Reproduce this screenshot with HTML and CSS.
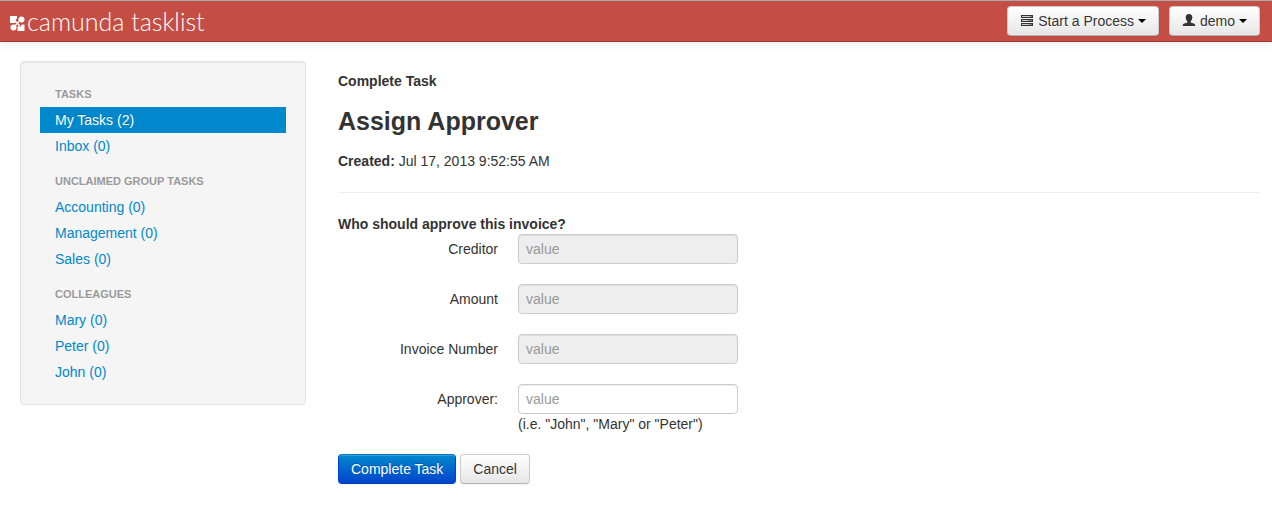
FILE: index.html
```html
<!DOCTYPE html>
<html lang="en">
<head>
<meta charset="utf-8">
<title>camunda tasklist</title>
<link rel="stylesheet" href="styles.css">
</head>
<body>
<header class="navbar">
  <a class="brand" href="#">
    <svg class="brand-mark" viewBox="0 0 15 15" aria-hidden="true">
      <path fill="#fff" d="M0 0h7v2.500L5.500 4l1 2L5 7H0zM8 9.500L10 11l2-2.500h2.500V15H7.500v-3z"/>
      <circle cx="11.500" cy="3.500" r="3" fill="#fff"/>
      <circle cx="3.500" cy="11.500" r="3" fill="#fff"/>
      <path fill="none" stroke="#fff" stroke-width="1.200" d="M5 5l2.500 2.500L10 10M9 5L7.500 7.500 5 9.500"/>
    </svg>
    <span>camunda tasklist</span>
  </a>
  <nav class="actions">
    <button class="btn" type="button">
      <svg class="icon" viewBox="0 0 14 14" aria-hidden="true"><path fill="#333" d="M1 1h12v3H1zM1 5h12v3H1zM1 9h12v3H1z"/><path fill="#ccc" d="M2 2h8v1H2zM2 6h6v1H2zM2 10h7v1H2z"/><path fill="#888" d="M10 2h2v1h-2zM8 6h4v1H8zM9 10h3v1H9z"/></svg>
      Start a Process <span class="caret"></span>
    </button>
    <button class="btn" type="button">
      <svg class="icon" viewBox="0 0 14 14" aria-hidden="true"><path fill="#333" d="M7 0c2.300 0 3.300 1.300 3.300 3.300 0 1.700-.6 3-1.600 4V8.500l3.600 1.300c.7.400.9 1.200.9 2.200H.8c0-1 .2-1.800.9-2.200l3.600-1.300V7.300c-1-1-1.600-2.300-1.600-4C3.700 1.300 4.700 0 7 0z"/></svg>
      demo <span class="caret"></span>
    </button>
  </nav>
</header>
<div class="page">
  <aside class="sidebar">
    <h2 class="nav-header">Tasks</h2>
    <ul class="nav-list">
      <li><a class="nav-link active" href="#">My Tasks (2)</a></li>
      <li><a class="nav-link" href="#">Inbox (0)</a></li>
    </ul>
    <h2 class="nav-header">Unclaimed Group Tasks</h2>
    <ul class="nav-list">
      <li><a class="nav-link" href="#">Accounting (0)</a></li>
      <li><a class="nav-link" href="#">Management (0)</a></li>
      <li><a class="nav-link" href="#">Sales (0)</a></li>
    </ul>
    <h2 class="nav-header">Colleagues</h2>
    <ul class="nav-list">
      <li><a class="nav-link" href="#">Mary (0)</a></li>
      <li><a class="nav-link" href="#">Peter (0)</a></li>
      <li><a class="nav-link" href="#">John (0)</a></li>
    </ul>
  </aside>
  <main class="content">
    <strong>Complete Task</strong>
    <h1 class="title">Assign Approver</h1>
    <div><strong>Created:</strong> Jul 17, 2013 9:52:55 AM</div>
    <hr class="divider">
    <form>
      <strong>Who should approve this invoice?</strong>
      <div class="field">
        <label class="label" for="creditor">Creditor</label>
        <input class="input" id="creditor" type="text" placeholder="value" disabled>
      </div>
      <div class="field">
        <label class="label" for="amount">Amount</label>
        <input class="input" id="amount" type="text" placeholder="value" disabled>
      </div>
      <div class="field">
        <label class="label" for="number">Invoice Number</label>
        <input class="input" id="number" type="text" placeholder="value" disabled>
      </div>
      <div class="field">
        <label class="label" for="approver">Approver:</label>
        <div>
          <input class="input" id="approver" type="text" placeholder="value">
          <div>(i.e. "John", "Mary" or "Peter")</div>
        </div>
      </div>
      <div class="form-actions">
        <button class="btn primary" type="submit">Complete Task</button>
        <button class="btn" type="button">Cancel</button>
      </div>
    </form>
  </main>
</div>
</body>
</html>
```
FILE: styles.css
```css
* { box-sizing: border-box; }
body {
  margin: 0;
  background: #fff;
  color: #333;
  font: 14px/20px "Liberation Sans", Arial, sans-serif;
}
.navbar {
  display: flex;
  align-items: center;
  justify-content: space-between;
  height: 42px;
  padding: 0 12px 0 10px;
  background: #c44d44;
  border-top: 1px solid #aaa;
  border-bottom: 1px solid #a03a34;
  box-shadow: 0 1px 10px rgba(0, 0, 0, .1);
}
.brand {
  display: flex;
  align-items: center;
  gap: 2px;
  color: #fff;
  font: 300 25px/40px Lato, sans-serif;
  text-decoration: none;
}
.brand-mark { width: 15px; height: 15px; margin-top: 5px; }
.actions { display: flex; gap: 10px; }
.btn {
  display: inline-flex;
  align-items: center;
  gap: 4px;
  height: 30px;
  padding: 4px 12px;
  border: 1px solid #ccc;
  border-bottom-color: #b3b3b3;
  border-radius: 4px;
  background: linear-gradient(#fff, #e6e6e6);
  box-shadow: inset 0 1px 0 rgba(255, 255, 255, .2), 0 1px 2px rgba(0, 0, 0, .05);
  color: #333;
  font: inherit;
  text-shadow: 0 1px 1px rgba(255, 255, 255, .75);
}
.btn.primary {
  border-color: #0077c0 #0044cc #0040b0;
  background: linear-gradient(#0088cc, #0044cc);
  color: #fff;
  text-shadow: 0 -1px 0 rgba(0, 0, 0, .25);
}
.icon { width: 14px; height: 14px; }
.caret {
  border: 4px solid transparent;
  border-top-color: #000;
  border-bottom: 0;
}
.page {
  display: grid;
  grid-template-columns: 143fr 461fr;
  align-items: start;
  gap: 32px;
  padding: 19px 12px 20px 20px;
}
.sidebar {
  padding: 19px;
  border: 1px solid #e3e3e3;
  border-radius: 4px;
  background: #f5f5f5;
  box-shadow: inset 0 1px 1px rgba(0, 0, 0, .05);
}
.nav-header {
  margin: 0;
  padding: 3px 15px;
  color: #999;
  font-size: 11px;
  line-height: 20px;
  text-shadow: 0 1px 0 rgba(255, 255, 255, .5);
  text-transform: uppercase;
}
.nav-list { margin: 0; padding: 0; list-style: none; }
.nav-list + .nav-header { margin-top: 9px; }
.nav-link {
  display: block;
  padding: 3px 15px;
  color: #08c;
  text-decoration: none;
}
.nav-link.active {
  background: #08c;
  color: #fff;
  text-shadow: 0 -1px 0 rgba(0, 0, 0, .2);
}
.content { padding-top: 10px; }
.title { margin: 10px 0; font-size: 25px; line-height: 40px; }
.divider {
  margin: 21px 0;
  border: 0;
  border-top: 1px solid #eee;
}
.field {
  display: grid;
  grid-template-columns: 160px 220px;
  column-gap: 20px;
  margin-bottom: 20px;
}
.label { padding-top: 5px; text-align: right; }
.input {
  display: block;
  width: 220px;
  height: 30px;
  padding: 4px 7px;
  border: 1px solid #ccc;
  border-radius: 4px;
  background: #fff;
  box-shadow: inset 0 1px 1px rgba(0, 0, 0, .075);
  color: #555;
  font: inherit;
}
.input:disabled { background: #eee; }
.input::placeholder { color: #999; }
.form-actions { display: flex; gap: 4px; }
```
